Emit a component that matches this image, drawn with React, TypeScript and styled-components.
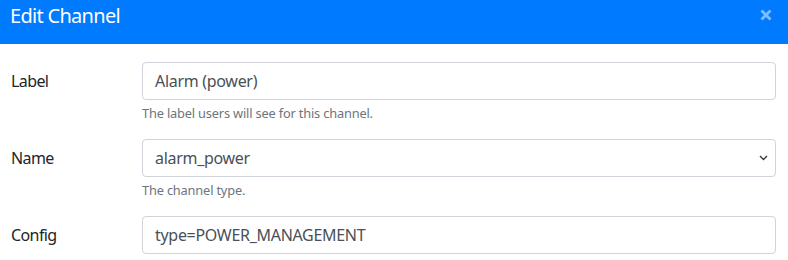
import React from 'react';
import styled, { createGlobalStyle } from 'styled-components';

const GlobalStyle = createGlobalStyle`
	body {
		margin: 0;
		background: #ffffff;
		font-family: 'Segoe UI', 'Noto Sans', 'Open Sans', sans-serif;
		color: #212529;
	}
`;

type Field = {
	label: string;
	value: string;
	help?: string;
	select?: boolean;
};

const fields: Field[] = [
	{ label: 'Label', value: 'Alarm (power)', help: 'The label users will see for this channel.' },
	{ label: 'Name', value: 'alarm_power', help: 'The channel type.', select: true },
	{ label: 'Config', value: 'type=POWER_MANAGEMENT' },
];

const Chevron = () => (
	<svg width="9" height="6" viewBox="0 0 9 6">
		<path d="M1 1 L4.5 4.5 L8 1" fill="none" stroke="#343a40" strokeWidth="1.4" />
	</svg>
);

const CloseIcon = () => (
	<svg width="12" height="12" viewBox="0 0 12 12">
		<path d="M1.5 1.5 L10.5 10.5 M10.5 1.5 L1.5 10.5" stroke="#80bdff" strokeWidth="2.8" strokeLinecap="butt" />
	</svg>
);

export const App = () => {
	return (
		<Modal>
			<GlobalStyle />
			<Header>
				<Title>Edit Channel</Title>
				<Close type="button" aria-label="Close">
					<CloseIcon />
				</Close>
			</Header>
			<Body>
				{fields.map(f => (
					<Row key={f.label}>
						<LabelCol>{f.label}</LabelCol>
						<Control>
							<Input select={!!f.select}>
								<span>{f.value}</span>
								{f.select && <Chevron />}
							</Input>
							{f.help && <Help>{f.help}</Help>}
						</Control>
					</Row>
				))}
			</Body>
		</Modal>
	);
};

const Modal = styled.div`
	width: 788px;
	height: 260px;
	overflow: hidden;
	background: #ffffff;
`;

const Header = styled.div`
	height: 44px;
	box-sizing: border-box;
	background: #007bff;
	display: flex;
	align-items: flex-start;
	justify-content: space-between;
	padding: 1px 16px 0 10px;
`;

const Title = styled.h5`
	margin: 0;
	font-size: 20px;
	font-weight: 400;
	line-height: 30px;
	letter-spacing: -0.7px;
	color: #ffffff;
`;

const Close = styled.button`
	border: 0;
	background: transparent;
	padding: 0;
	margin-top: 8px;
	display: flex;
	line-height: 0;
`;

const Body = styled.div`
	padding: 18px 12px 0 11px;
	display: flex;
	flex-direction: column;
	gap: 16px;
`;

const Row = styled.div`
	display: flex;
	align-items: flex-start;
`;

const LabelCol = styled.label`
	width: 131px;
	font-size: 16px;
	line-height: 38px;
	letter-spacing: -0.6px;
	color: #212529;
`;

const Control = styled.div`
	flex: 1;
	display: flex;
	flex-direction: column;
`;

const Input = styled.div<{ select: boolean }>`
	height: 38px;
	box-sizing: border-box;
	border: 1px solid #ced4da;
	border-radius: 4px;
	padding: 0 12px;
	display: flex;
	align-items: center;
	justify-content: space-between;
	font-size: 16px;
	letter-spacing: -0.3px;
	color: #495057;
	background: #ffffff;

	svg {
		margin-right: -5px;
	}
`;

const Help = styled.small`
	margin-top: 4px;
	font-size: 12.8px;
	line-height: 19px;
	letter-spacing: -0.17px;
	color: #6c757d;
`;

export default App;
